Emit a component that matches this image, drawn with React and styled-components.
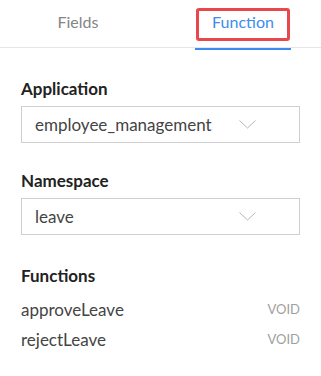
import React from "react";
import styled, { createGlobalStyle } from "styled-components";

const Global = createGlobalStyle`
  html, body { margin: 0; padding: 0; background: #fff; }
  body { font-family: Lato, "Open Sans", sans-serif; }
`;

const Panel = styled.div`
  width: 321px;
  height: 376px;
  background: #fff;
  overflow: hidden;
`;

const TabBar = styled.div`
  display: flex;
  gap: 69px;
  padding-left: 30px;
  height: 48px;
  border-bottom: 1px solid #e6e6e6;
  box-sizing: border-box;
`;

const Tab = styled.div`
  position: relative;
  width: 96px;
  display: flex;
  align-items: flex-start;
  justify-content: center;
  padding-top: 12px;
  box-sizing: border-box;
  font-size: 16px;
  color: ${(p) => (p.$active ? "#3b8cf0" : "#858585")};
  border-bottom: ${(p) => (p.$active ? "2px solid #3b8cf0" : "none")};
  height: ${(p) => (p.$active ? "50px" : "48px")};
`;

const Highlight = styled.div`
  position: absolute;
  left: 1px;
  top: 8px;
  width: 94px;
  height: 33px;
  border: 3px solid #e8474c;
  border-radius: 3px;
  box-sizing: border-box;
`;

const Body = styled.div`
  padding: 0 21px;
`;

const Label = styled.div`
  font-size: 17px;
  font-weight: 700;
  color: #222;
  margin-top: ${(p) => p.$mt}px;
  line-height: 20px;
`;

const Select = styled.div`
  margin-top: 7px;
  height: 37px;
  border: 1px solid #cfcfcf;
  box-sizing: border-box;
  display: flex;
  align-items: center;
  padding: 0 43px 0 13px;
  justify-content: space-between;
  font-size: 17px;
  color: #444;
`;

const Row = styled.div`
  display: flex;
  justify-content: space-between;
  align-items: center;
  height: 30px;
  font-size: 17px;
  color: #444;
`;

const Type = styled.span`
  font-size: 13px;
  color: #a0a0a0;
`;

const Rows = styled.div`
  margin-top: 8px;
`;

const Chevron = () => (
  <svg width="17" height="9" viewBox="0 0 17 9">
    <path d="M0.5 0.5 L8.5 8 L16.5 0.5" fill="none" stroke="#b5b5b5" strokeWidth="1" />
  </svg>
);

export default function App() {
  return (
    <Panel>
      <Global />
      <TabBar>
        <Tab>Fields</Tab>
        <Tab $active>
          Function
          <Highlight />
        </Tab>
      </TabBar>
      <Body>
        <Label $mt={31}>Application</Label>
        <Select>
          <span>employee_management</span>
          <Chevron />
        </Select>
        <Label $mt={28}>Namespace</Label>
        <Select>
          <span>leave</span>
          <Chevron />
        </Select>
        <Label $mt={31}>Functions</Label>
        <Rows>
          <Row>
            <span>approveLeave</span>
            <Type>VOID</Type>
          </Row>
          <Row>
            <span>rejectLeave</span>
            <Type>VOID</Type>
          </Row>
        </Rows>
      </Body>
    </Panel>
  );
}
